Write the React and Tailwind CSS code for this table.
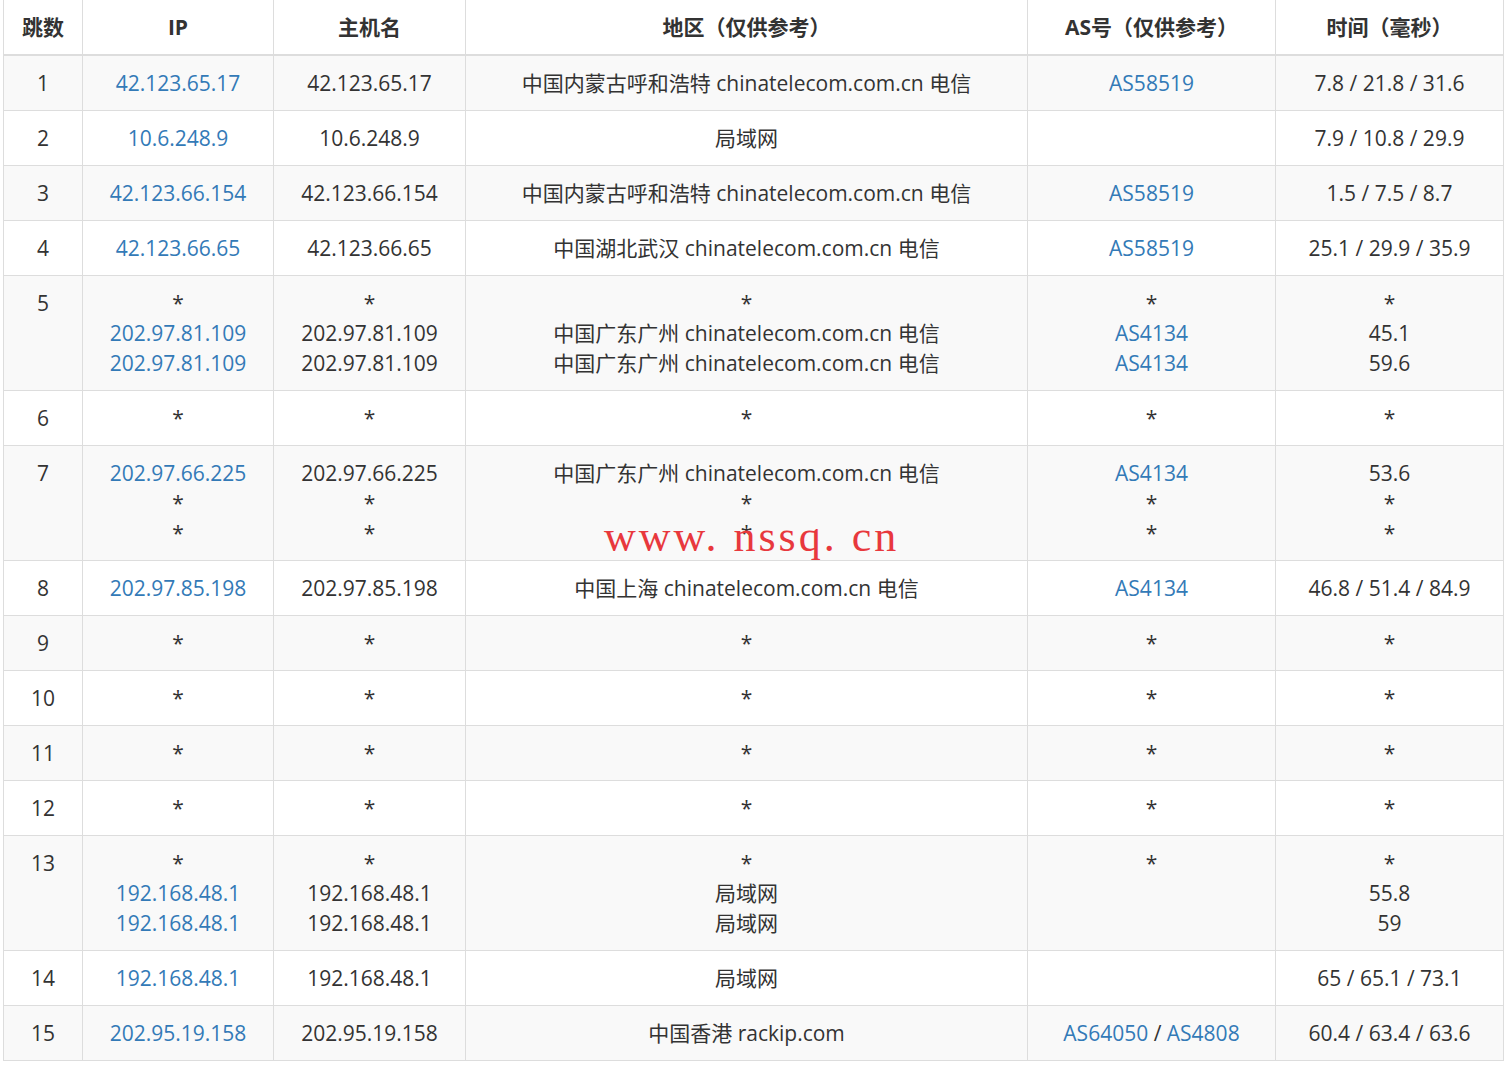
const rows = [
  { hop: 1, ip: ['42.123.65.17'], host: ['42.123.65.17'], region: ['中国内蒙古呼和浩特 chinatelecom.com.cn 电信'], as: [['AS58519']], time: ['7.8 / 21.8 / 31.6'] },
  { hop: 2, ip: ['10.6.248.9'], host: ['10.6.248.9'], region: ['局域网'], as: [[]], time: ['7.9 / 10.8 / 29.9'] },
  { hop: 3, ip: ['42.123.66.154'], host: ['42.123.66.154'], region: ['中国内蒙古呼和浩特 chinatelecom.com.cn 电信'], as: [['AS58519']], time: ['1.5 / 7.5 / 8.7'] },
  { hop: 4, ip: ['42.123.66.65'], host: ['42.123.66.65'], region: ['中国湖北武汉 chinatelecom.com.cn 电信'], as: [['AS58519']], time: ['25.1 / 29.9 / 35.9'] },
  {
    hop: 5,
    ip: ['*', '202.97.81.109', '202.97.81.109'],
    host: ['*', '202.97.81.109', '202.97.81.109'],
    region: ['*', '中国广东广州 chinatelecom.com.cn 电信', '中国广东广州 chinatelecom.com.cn 电信'],
    as: [['*'], ['AS4134'], ['AS4134']],
    time: ['*', '45.1', '59.6'],
  },
  { hop: 6, ip: ['*'], host: ['*'], region: ['*'], as: [['*']], time: ['*'] },
  {
    hop: 7,
    ip: ['202.97.66.225', '*', '*'],
    host: ['202.97.66.225', '*', '*'],
    region: ['中国广东广州 chinatelecom.com.cn 电信', '*', '*'],
    as: [['AS4134'], ['*'], ['*']],
    time: ['53.6', '*', '*'],
  },
  { hop: 8, ip: ['202.97.85.198'], host: ['202.97.85.198'], region: ['中国上海 chinatelecom.com.cn 电信'], as: [['AS4134']], time: ['46.8 / 51.4 / 84.9'] },
  { hop: 9, ip: ['*'], host: ['*'], region: ['*'], as: [['*']], time: ['*'] },
  { hop: 10, ip: ['*'], host: ['*'], region: ['*'], as: [['*']], time: ['*'] },
  { hop: 11, ip: ['*'], host: ['*'], region: ['*'], as: [['*']], time: ['*'] },
  { hop: 12, ip: ['*'], host: ['*'], region: ['*'], as: [['*']], time: ['*'] },
  {
    hop: 13,
    ip: ['*', '192.168.48.1', '192.168.48.1'],
    host: ['*', '192.168.48.1', '192.168.48.1'],
    region: ['*', '局域网', '局域网'],
    as: [['*']],
    time: ['*', '55.8', '59'],
  },
  { hop: 14, ip: ['192.168.48.1'], host: ['192.168.48.1'], region: ['局域网'], as: [[]], time: ['65 / 65.1 / 73.1'] },
  { hop: 15, ip: ['202.95.19.158'], host: ['202.95.19.158'], region: ['中国香港 rackip.com'], as: [['AS64050', 'AS4808']], time: ['60.4 / 63.4 / 63.6'] },
]

// "*" entries stay plain text, everything else in IP / AS columns is a link
function LinkLine({ text }) {
  if (text === '*') return <div>*</div>
  return <div><a href="#" className="text-[#337ab7]">{text}</a></div>
}

function AsLine({ items }) {
  if (items.length === 0) return null
  if (items[0] === '*') return <div>*</div>
  return (
    <div>
      {items.map((a, i) => (
        <span key={a}>
          {i > 0 && ' / '}
          <a href="#" className="text-[#337ab7]">{a}</a>
        </span>
      ))}
    </div>
  )
}

function Cell({ children }) {
  return (
    <td className="border border-[#dddddd] px-2 py-[12px] align-top text-center">
      {children}
    </td>
  )
}

export default function App() {
  const headers = ['跳数', 'IP', '主机名', '地区（仅供参考）', 'AS号（仅供参考）', '时间（毫秒）']

  return (
    <div
      className="relative bg-white min-h-[1068px] text-[#333333] text-[21px] leading-[30px]"
      style={{ fontFamily: '"Open Sans", "Noto Sans CJK SC", sans-serif' }}
    >
      <table className="ml-[3px] w-[1500px] table-fixed border-collapse">
        <colgroup>
          <col className="w-[79px]" />
          <col className="w-[191px]" />
          <col className="w-[192px]" />
          <col className="w-[562px]" />
          <col className="w-[248px]" />
          <col className="w-[228px]" />
        </colgroup>
        <thead>
          <tr>
            {headers.map((h) => (
              <th
                key={h}
                className="border-x border-[#dddddd] border-b-2 pt-[12px] pb-[12px] px-1 font-bold text-center align-bottom"
              >
                {h}
              </th>
            ))}
          </tr>
        </thead>
        <tbody>
          {rows.map((r, idx) => (
            <tr key={r.hop} className={idx % 2 === 0 ? 'bg-[#f9f9f9]' : 'bg-white'}>
              <Cell>{r.hop}</Cell>
              <Cell>{r.ip.map((t, i) => <LinkLine key={i} text={t} />)}</Cell>
              <Cell>{r.host.map((t, i) => <div key={i}>{t}</div>)}</Cell>
              <Cell>{r.region.map((t, i) => <div key={i}>{t}</div>)}</Cell>
              <Cell>{r.as.map((items, i) => <AsLine key={i} items={items} />)}</Cell>
              <Cell>{r.time.map((t, i) => <div key={i}>{t}</div>)}</Cell>
            </tr>
          ))}
        </tbody>
      </table>

      {/* watermark over row 7 */}
      <div
        className="absolute left-[604px] top-[512px] text-[44px] leading-[50px] tracking-[3px] text-[#e8383d] pointer-events-none"
        style={{ fontFamily: '"Liberation Serif", serif' }}
      >
        www. nssq. cn
      </div>
    </div>
  )
}
